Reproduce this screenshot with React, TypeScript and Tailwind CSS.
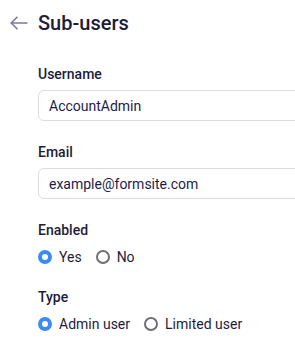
import { useState } from "react";

function Radio({ checked, label, onClick }: { checked: boolean; label: string; onClick: () => void }) {
    return (
        <button type="button" onClick={onClick} className="flex items-center gap-[7px] h-5">
            {checked ? (
                <span className="w-[14px] h-[14px] rounded-full border-[4px] border-[#3b8bf2] bg-white box-border" />
            ) : (
                <span className="w-[14px] h-[14px] rounded-full border-2 border-[#6f6f74] bg-white box-border" />
            )}
            <span className="text-[14px] leading-5 text-[#1d1d3a]">{label}</span>
        </button>
    )
}

export default function App() {
    const [username, setUsername] = useState("AccountAdmin")
    const [email, setEmail] = useState("example@formsite.com")
    const [enabled, setEnabled] = useState(true)
    const [type, setType] = useState("admin")

    return (
        <div className="w-[295px] h-[349px] overflow-hidden bg-white font-['Roboto',sans-serif]">

            {/* header */}
            <div className="flex items-center pt-[9px] pl-[10px]">
                <svg width="18" height="14" viewBox="0 0 18 14" fill="none" stroke="#7c7c8e" strokeWidth="1.6" strokeLinecap="round" strokeLinejoin="round">
                    <path d="M17 7H1.5" />
                    <path d="M7 1.2L1.2 7L7 12.8" />
                </svg>
                <h1 className="ml-[10px] text-[20px] leading-7 font-medium text-[#1b1d3a]">Sub-users</h1>
            </div>

            <div className="pl-[38px] mt-[27px] -mr-10">
                <label htmlFor="username" className="block text-[14px] leading-5 font-medium text-[#1b1d3a]">Username</label>
                <input id="username" value={username} onChange={(e) => setUsername(e.target.value)} className="mt-[6px] w-full h-[31px] rounded-md border border-[#dcdbe6] px-[10px] text-[14px] text-[#1d1d4a] outline-none" />

                <label htmlFor="email" className="block mt-[21px] text-[14px] leading-5 font-medium text-[#1b1d3a]">Email</label>
                <input id="email" value={email} onChange={(e) => setEmail(e.target.value)} className="mt-[6px] w-full h-[31px] rounded-md border border-[#dcdbe6] px-[10px] text-[14px] text-[#1d1d4a] outline-none" />

                <p className="mt-[21px] text-[14px] leading-5 font-medium text-[#1b1d3a]">Enabled</p>
                <div className="mt-[7px] flex items-center gap-[14px]">
                    <Radio checked={enabled} label="Yes" onClick={() => setEnabled(true)} />
                    <Radio checked={!enabled} label="No" onClick={() => setEnabled(false)} />
                </div>

                <p className="mt-[20px] text-[14px] leading-5 font-medium text-[#1b1d3a]">Type</p>
                <div className="mt-[7px] flex items-center gap-[14px]">
                    <Radio checked={type === "admin"} label="Admin user" onClick={() => setType("admin")} />
                    <Radio checked={type === "limited"} label="Limited user" onClick={() => setType("limited")} />
                </div>
            </div>
        </div>
    )
}
